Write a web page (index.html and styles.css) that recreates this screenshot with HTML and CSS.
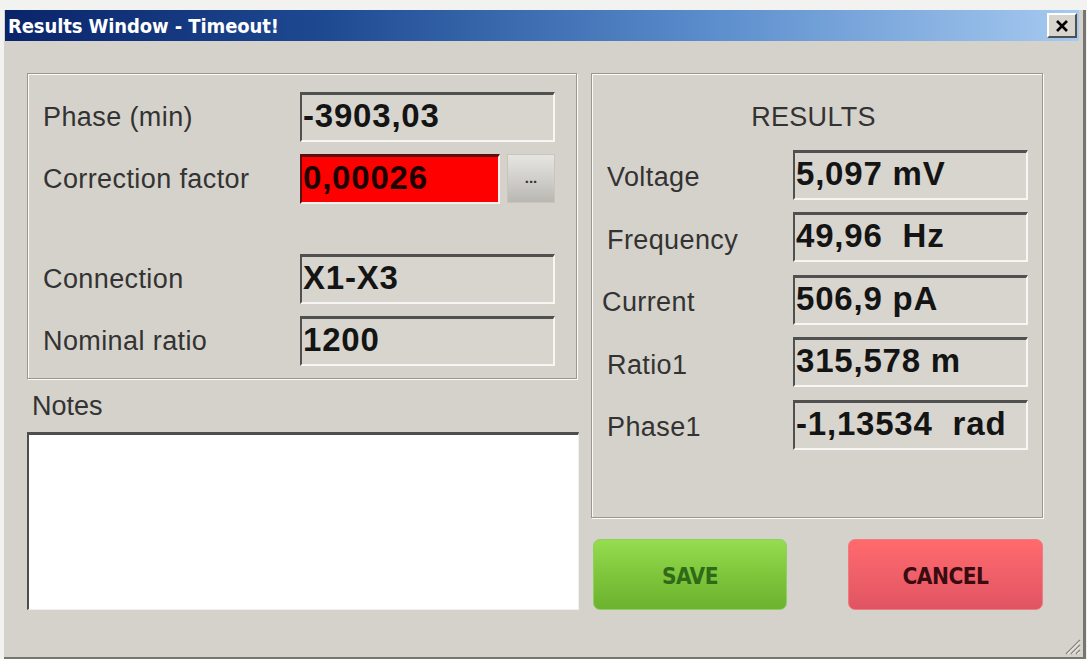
FILE: index.html
```html
<!DOCTYPE html>
<html>
<head>
<meta charset="utf-8">
<link rel="stylesheet" href="styles.css">
</head>
<body>
<div class="screen">
  <div class="window">
    <div class="titlebar">
      <span class="title">Results Window - Timeout!</span>
      <button class="close" type="button" aria-label="Close">
        <svg width="14" height="12" viewBox="0 0 14 12"><path d="M2 1 L12 11 M12 1 L2 11" stroke="#000" stroke-width="2.6" fill="none"/></svg>
      </button>
    </div>
    <div class="client">
      <div class="left-col">
        <div class="group inputs">
          <div class="row">
            <span class="label">Phase (min)</span>
            <div class="field">-3903,03</div>
          </div>
          <div class="row">
            <span class="label">Correction factor</span>
            <div class="field-pair">
              <div class="field red">0,00026</div>
              <button class="dots" type="button">...</button>
            </div>
          </div>
          <div class="row spaced">
            <span class="label">Connection</span>
            <div class="field">X1-X3</div>
          </div>
          <div class="row">
            <span class="label">Nominal ratio</span>
            <div class="field">1200</div>
          </div>
        </div>
        <div class="notes-label">Notes</div>
        <div class="notes"></div>
      </div>
      <div class="right-col">
        <div class="group results">
          <div class="results-title">RESULTS</div>
          <div class="rrow">
            <span class="label">Voltage</span>
            <div class="field">5,097 mV</div>
          </div>
          <div class="rrow">
            <span class="label">Frequency</span>
            <div class="field">49,96&nbsp; Hz</div>
          </div>
          <div class="rrow">
            <span class="label shift">Current</span>
            <div class="field">506,9 pA</div>
          </div>
          <div class="rrow">
            <span class="label">Ratio1</span>
            <div class="field">315,578 m</div>
          </div>
          <div class="rrow">
            <span class="label">Phase1</span>
            <div class="field">-1,13534&nbsp; rad</div>
          </div>
        </div>
        <div class="buttons">
          <button class="btn save" type="button">SAVE</button>
          <button class="btn cancel" type="button">CANCEL</button>
        </div>
      </div>
    </div>
    <svg class="grip" width="20" height="20" viewBox="0 0 20 20">
      <path d="M19 5 L5 19 M19 10 L10 19 M19 15 L15 19" stroke="#8a8780" stroke-width="1.5" fill="none"/>
      <path d="M19 6.5 L6.5 19 M19 11.5 L11.5 19 M19 16.5 L16.5 19" stroke="#fff" stroke-width="1" fill="none"/>
    </svg>
  </div>
</div>
</body>
</html>
```
FILE: styles.css
```css
* { box-sizing: border-box; }
html, body { margin: 0; padding: 0; }
body {
  width: 1087px;
  height: 659px;
  background: #f2f2f0;
  overflow: hidden;
  font-family: "Liberation Sans", Arial, sans-serif;
}
.screen {
  padding: 10px 0 0 4px;
}
.window {
  position: relative;
  width: 1082px;
  height: 649px;
  background: #d5d2cb;
  border-right: 3px solid #77756f;
  border-bottom: 2px solid #77756f;
}
.titlebar {
  height: 31px;
  margin-left: 1px;
  margin-right: 4px;
  background: linear-gradient(to right, #0a246a 0%, #1e4a92 30%, #5a8ccc 65%, #a6caf0 100%);
  display: flex;
  align-items: center;
  justify-content: space-between;
  padding: 0 2px 0 3px;
}
.title {
  color: #fff;
  font-family: "DejaVu Sans Condensed", "DejaVu Sans", sans-serif;
  font-weight: bold;
  font-size: 20px;
  letter-spacing: -0.1px;
}
.close {
  width: 30px;
  height: 25px;
  padding: 0;
  background: #d8d5ce;
  border: 2px solid;
  border-color: #ffffff #505050 #505050 #ffffff;
  display: flex;
  align-items: center;
  justify-content: center;
}
.client {
  display: flex;
  gap: 12px;
  padding: 32px 0 0 23px;
}
.left-col {
  width: 552px;
  display: flex;
  flex-direction: column;
}
.right-col {
  width: 452px;
  display: flex;
  flex-direction: column;
}
.group {
  border: 1px solid #9a978f;
  box-shadow: inset 1px 1px 0 #fbfbf8, 1px 1px 0 #fbfbf8;
}
.inputs {
  width: 550px;
  height: 306px;
  padding: 18px 21px 0 15px;
  display: flex;
  flex-direction: column;
  gap: 12px;
}
.row {
  display: grid;
  grid-template-columns: 257px 255px;
  align-items: center;
}
.row.spaced { margin-top: 38px; }
.label {
  font-size: 27px;
  color: #333;
  letter-spacing: 0.4px;
}
.field {
  height: 50px;
  background: #d8d5cf;
  border-style: solid;
  border-width: 3px 2px 2px 2px;
  border-color: #505050 #f6f6f4 #f6f6f4 #505050;
  font-weight: bold;
  font-size: 33px;
  letter-spacing: 0.8px;
  color: #141414;
  padding-left: 1px;
  line-height: 42px;
  white-space: nowrap;
}
.field-pair {
  display: flex;
  gap: 7px;
}
.field.red {
  width: 200px;
  background: #ff0000;
  border-color: #5a1010 #f8f0f0 #f8f0f0 #5a1010;
  color: #1c0000;
}
.dots {
  width: 48px;
  height: 49px;
  padding: 0 0 2px 0;
  border: 1px solid #c8c5be;
  background: linear-gradient(to bottom, #e6e5e2 0%, #cfcdc9 55%, #b9b7b2 100%);
  font-family: "Liberation Sans", Arial, sans-serif;
  font-weight: bold;
  font-size: 15px;
  color: #333;
}
.notes-label {
  margin: 12px 0 11px 5px;
  height: 30px;
  line-height: 30px;
  font-size: 27px;
  color: #333;
}
.notes {
  height: 178px;
  background: #fff;
  border-style: solid;
  border-width: 3px 1px 1px 2px;
  border-color: #4e4e4e #f0f0ee #f0f0ee #4e4e4e;
}
.results {
  height: 445px;
  padding: 28px 14px 0 15px;
  display: flex;
  flex-direction: column;
  gap: 12.5px;
}
.results-title {
  text-align: center;
  font-size: 27px;
  letter-spacing: 0.3px;
  color: #333;
  height: 30px;
  line-height: 30px;
  margin-bottom: 5px;
  padding-right: 8px;
}
.rrow {
  display: grid;
  grid-template-columns: 186px 235px;
  align-items: center;
}
.rrow .label { padding-top: 6px; }
.label.shift { margin-left: -5px; }
.rrow .field { height: 50px; }
.buttons {
  display: flex;
  justify-content: space-between;
  margin-top: 21px;
  padding-left: 2px;
}
.btn {
  width: 195px;
  height: 71px;
  border-radius: 7px;
  font-family: "DejaVu Sans Condensed", "DejaVu Sans", sans-serif;
  font-weight: bold;
  font-size: 22.5px;
  padding-top: 4px;
  letter-spacing: -0.5px;
}
.save {
  width: 194px;
  border: 1px solid #8ed060;
  background: linear-gradient(to bottom, #95dc50 0%, #7fc63c 50%, #6cb22e 100%);
  color: #2f6a18;
}
.cancel {
  border: 1px solid #f07a80;
  background: linear-gradient(to bottom, #ff6a6c 0%, #f0606a 50%, #e05462 100%);
  color: #3a0c10;
}
.grip {
  position: absolute;
  right: 2px;
  bottom: 2px;
}
```
